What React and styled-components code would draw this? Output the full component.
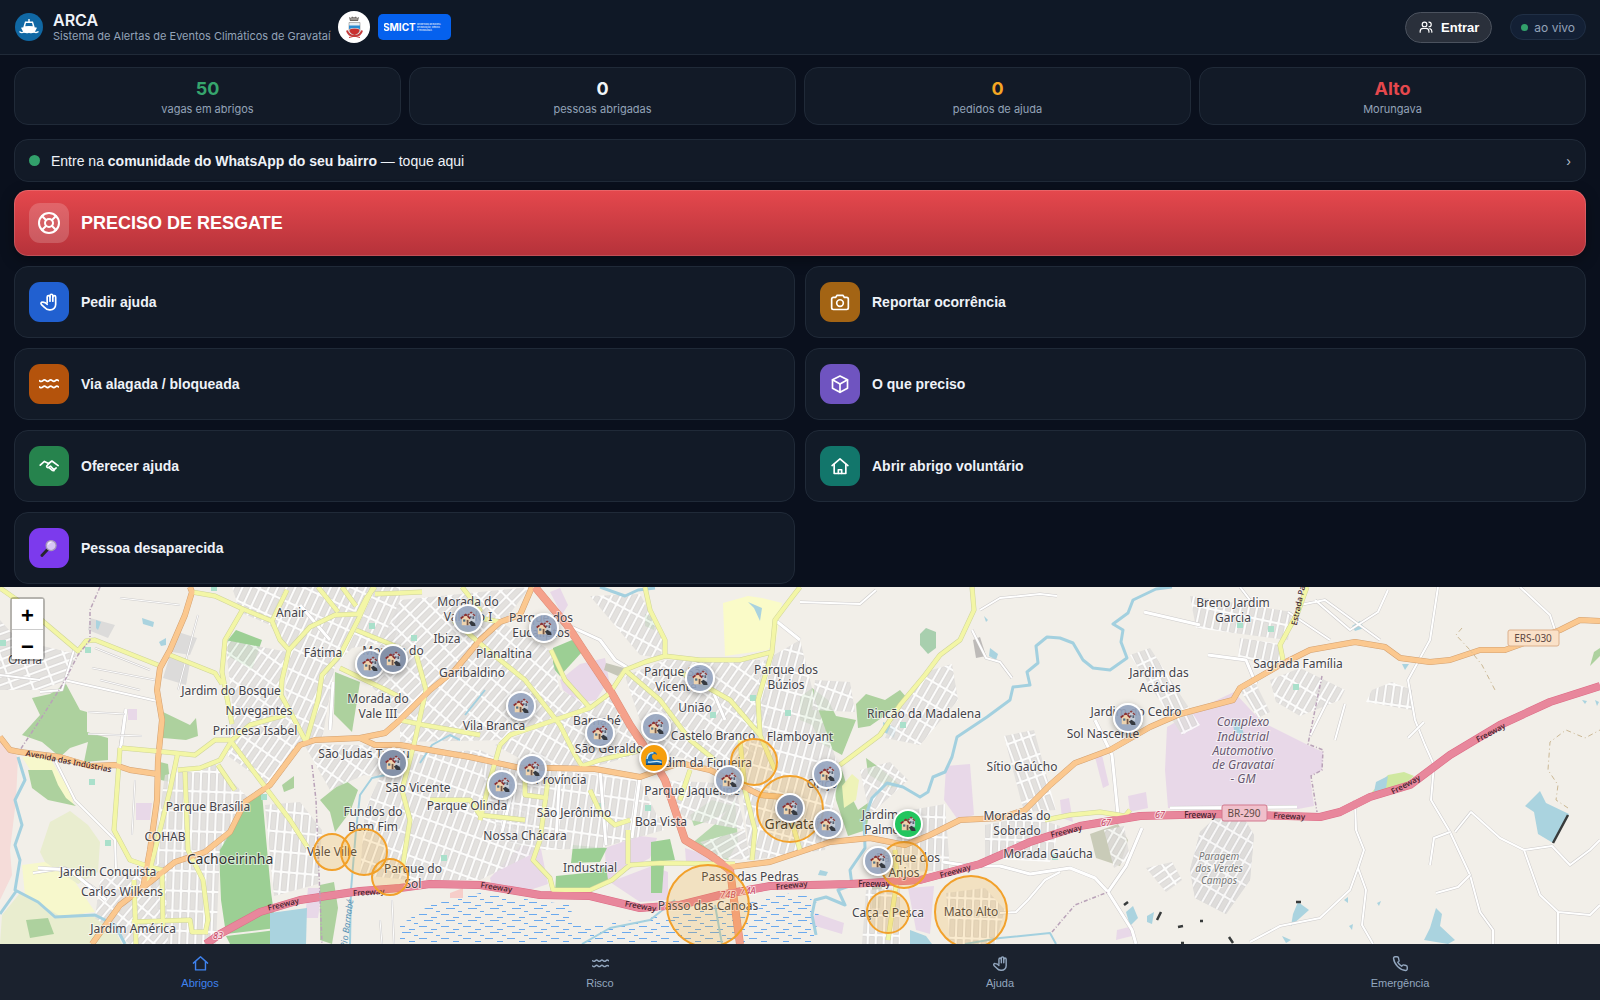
import React, { useState } from "react";
import styled, { createGlobalStyle } from "styled-components";

const stats = [
  { value: "50", label: "vagas em abrigos", color: "#36a56d" },
  { value: "0", label: "pessoas abrigadas", color: "#f1f5f9" },
  { value: "0", label: "pedidos de ajuda", color: "#f5a623" },
  { value: "Alto", label: "Morungava", color: "#e5484d" },
];

const actions = [
  { icon: "hand", label: "Pedir ajuda", color: "#2160d0" },
  { icon: "camera", label: "Reportar ocorrência", color: "#a36414" },
  { icon: "waves", label: "Via alagada / bloqueada", color: "#b4530c" },
  { icon: "box", label: "O que preciso", color: "#6f54c0" },
  { icon: "shake", label: "Oferecer ajuda", color: "#26834d" },
  { icon: "shelter", label: "Abrir abrigo voluntário", color: "#12766b" },
  { icon: "search", label: "Pessoa desaparecida", color: "#7c3aed" },
];

const tabs = [
  { icon: "home", label: "Abrigos" },
  { icon: "waves", label: "Risco" },
  { icon: "hand", label: "Ajuda" },
  { icon: "phone", label: "Emergência" },
];

const iconPaths = {
  hand: [
    "M9.8 13V6a1.7 1.7 0 0 1 3.4 0v5",
    "M13.2 6V4.4a1.7 1.7 0 0 1 3.4 0V11",
    "M16.6 6a1.7 1.7 0 0 1 3.4 0v9a6.5 6.5 0 0 1-6.5 6.5h-1c-2.6 0-4.3-1-5.6-2.8l-3.900-3.600a1.700 1.700 0 0 1 1.700-2.900c1.900.1 3.600.6 5.100 2.600",
  ],
  camera: [
    "M8.5 4h7L17.3 6.500H20a2 2 0 0 1 2 2V19a2 2 0 0 1-2 2H4a2 2 0 0 1-2-2V8.500a2 2 0 0 1 2-2h2.700z",
    "M16 13.300a4 4 0 1 1-8 0 4 4 0 0 1 8 0z",
  ],
  waves: [
    "M.5 8c1.600 1.400 2.800 1.400 4.200 0s2.400-1.200 3.700 0 2.400 1.400 3.800 0 2.400-1.200 3.700 0 2.400 1.400 3.800 0 2.200-1.200 3.800 0",
    "M.5 15.500c1.600 1.400 2.800 1.400 4.200 0s2.400-1.200 3.700 0 2.400 1.400 3.800 0 2.400-1.200 3.700 0 2.400 1.400 3.800 0 2.200-1.200 3.800 0",
  ],
  box: ["M12 2.500 21 7v10l-9 5-9-5V7z", "M3 7l9 5 9-5", "M12 12v10"],
  shake: [
    "M1.500 11 6.500 6.500l5 2.500 4-3 7.500 5.500",
    "M12 9 9.200 12a1.600 1.600 0 0 0 2.300 1.800l2.300-1.600 4.200 4.300 2.600-2.200",
    "M12.800 14.500l3.200 2.800 2 .2",
  ],
  shelter: ["M2.500 11.500 12 3.500l9.500 8", "M5 10v11h14V10", "M10 21v-4.500h4V21"],
  home: ["M2 11.500 12 2.500 22 11.500", "M5 9.500V21h14V9.500"],
  phone: [
    "M21.500 16.800v3a2 2 0 0 1-2.200 2C11 21 3 13 2.200 4.700a2 2 0 0 1 2-2.200h3a2 2 0 0 1 2 1.700c.1 1 .4 1.900.7 2.800a2 2 0 0 1-.4 2.100L8.200 10.400a16 16 0 0 0 5.400 5.400l1.300-1.300a2 2 0 0 1 2.100-.4c.9.300 1.800.6 2.800.7a2 2 0 0 1 1.700 2z",
  ],
  people: [
    "M13.500 7.500a4 4 0 1 1-8 0 4 4 0 0 1 8 0z",
    "M2 21v-2a5 5 0 0 1 5-4.500h5a5 5 0 0 1 5 4.500v2",
    "M17 3.500a4 4 0 0 1 0 8",
    "M18.500 14.800A5 5 0 0 1 22 19.500V21",
  ],
  buoy: [
    "M22 12a10 10 0 1 1-20 0 10 10 0 0 1 20 0z",
    "M16 12a4 4 0 1 1-8 0 4 4 0 0 1 8 0z",
    "M5 5l4.200 4.200M14.800 14.800 19 19M19 5l-4.200 4.200M9.200 14.800 5 19",
  ],
};

function Icon({ name, size = 20, weight = 2 }) {
  if (name === "search") {
    return (
      <svg width={size} height={size} viewBox="0 0 24 24" aria-hidden="true">
        <path d="M3.500 21 10.500 13.500" stroke="#26262e" strokeWidth="3.500" strokeLinecap="round" />
        <circle cx="14.500" cy="9" r="6" fill="#d7c6f5" stroke="#a79bb8" strokeWidth="1.500" />
        <path d="M11 8a4 4 0 0 1 4-3" stroke="#f4edff" strokeWidth="1.500" fill="none" />
      </svg>
    );
  }
  return (
    <svg
      width={size}
      height={size}
      viewBox="0 0 24 24"
      fill="none"
      stroke="currentColor"
      strokeWidth={weight}
      strokeLinecap="round"
      strokeLinejoin="round"
      aria-hidden="true"
    >
      {iconPaths[name].map((d) => (
        <path key={d} d={d} />
      ))}
    </svg>
  );
}

const ArcaLogo = () => (
  <svg width="28" height="28" viewBox="0 0 28 28" aria-hidden="true">
    <circle cx="14" cy="14" r="14" fill="#1068a4" />
    <path d="M13.300 6h1.400v2.500h-1.400zM10 8.500h8l1.800 6H8.200z" fill="#fff" />
    <path d="M11 10h6l.8 3.200h-7.600z" fill="#1068a4" />
    <path d="M6 14.800l8-1.800 8 1.800-2.500 4.700h-11z" fill="#fff" />
    <path d="M4.500 18.500c2 2 3.500 1 4.700.4 1.800 1 3.300 1 4.800 0 1.500 1 3 1 4.800 0 1.500.7 3 1.200 4.700-.4" stroke="#fff" strokeWidth="1.300" fill="none" />
  </svg>
);

const CityCrest = () => (
  <svg width="32" height="32" viewBox="0 0 32 32" aria-hidden="true">
    <circle cx="16" cy="16" r="16" fill="#fff" />
    <path d="M11 6l2 1 1-1.500 2 1 2-1 1 1.500 2-1-1 4h-8z" fill="#6f6a66" />
    <path d="M12.500 8h7" stroke="#c8c3be" strokeWidth="1" />
    <path d="M11 11.500h11v7q0 4-5.500 5.500-5.500-1.500-5.500-5.500z" fill="#e8eef4" stroke="#777" strokeWidth=".5" />
    <path d="M11 14.500h11v3.500q-5.500-2-11 0z" fill="#2d8bd0" />
    <path d="M11.500 18.500q5-2 10 0 0 4-5 5.500-5-1.500-5-5.500z" fill="#c9302f" />
    <path d="M9 19.500c1 4 3 5.500 7.500 5.500s6.500-1.500 7.500-5.500" stroke="#c43b3b" strokeWidth="2" fill="none" />
    <path d="M11 26.500l4-1h3l4 1" stroke="#c43b3b" strokeWidth="1" fill="none" />
  </svg>
);

const SmictLogo = () => (
  <svg width="61" height="14" viewBox="0 0 61 14" fill="#fff" fontFamily="Inter, sans-serif" fontWeight="700">
    <text x="-1" y="10.500" fontSize="10">SMICT</text>
    <g fontSize="2" fontWeight="500">
      <text x="33" y="5">SECRETARIA MUNICIPAL</text>
      <text x="33" y="8">DE INOVAÇÃO, CIÊNCIA</text>
      <text x="33" y="11">E TECNOLOGIA</text>
    </g>
  </svg>
);

// The map is drawn in its own space: x 0..1600, y 587..944
const MAP = { left: 0, top: 587, width: 1600, height: 357 };

const land = [
  { fill: "#f5dcd9", points: "0,740 18,757 16,800 10,850 12,875 0,900" },
  { fill: "#e9edcf", points: "40,852 50,822 70,811 88,825 100,842 98,872 78,884 48,868" },
  { fill: "#e9edcf", points: "20,893 45,905 90,915 112,925 122,944 0,944 2,915" },
  { fill: "#f7f8cc", points: "22,757 48,755 60,775 70,790 74,806 56,800 40,785" },
  { fill: "#f7f8cc", points: "22,865 45,862 75,882 95,912 60,916 25,895" },
  { fill: "#fafbc8", points: "723,603 748,596 762,598 782,603 776,640 768,650 725,656" },
  { fill: "#dcdbda", points: "178,632 197,638 190,655 172,652" },
  { fill: "#dcdbda", points: "170,655 190,663 186,685 163,678" },
  { fill: "#dcdbda", points: "90,618 115,625 108,638 88,630" },
  { fill: "#e8d8e8", points: "560,680 580,664 605,658 609,680 596,700 580,703 563,690" },
  { fill: "#e8d8e8", points: "550,592 560,588 568,605 562,615" },
  { fill: "#e8d8e8", points: "490,878 520,846 540,844 548,884 530,890 492,886" },
  { fill: "#e8d8e8", points: "605,848 640,836 657,838 650,858 606,882" },
  { fill: "#e8d8e8", points: "610,882 652,866 668,872 668,900 640,902" },
  { fill: "#e8d8e8", points: "685,848 706,855 715,862 686,862" },
  { fill: "#e8d8e8", points: "136,803 152,803 150,820 136,820" },
  { fill: "#e8d8e8", points: "128,709 137,709 137,720 128,720" },
  { fill: "#e8d8e8", points: "308,888 322,888 318,918 305,918" },
  { fill: "#f6cdc9", points: "450,893 463,888 463,898 450,898" },
  { fill: "#e8d8e8", points: "946,766 970,764 974,815 958,820 944,800" },
  { fill: "#e8d8e8", points: "908,888 934,886 930,934 916,930" },
  { fill: "#e8d8e8", points: "815,913 844,923 842,934 812,925" },
  { fill: "#e8d8e8", points: "1095,757 1102,755 1109,785 1103,788" },
  { fill: "#e8d8e8", points: "1060,800 1069,798 1073,822 1062,818" },
  { fill: "#e8d8e8", points: "1128,796 1146,792 1148,808 1130,812" },
  { fill: "#e8d8e8", points: "1117,930 1133,926 1132,936 1116,940" },
  { fill: "#e8d8e8", points: "1167,727 1200,708 1234,692 1262,722 1290,736 1308,745 1323,752 1322,770 1310,776 1314,806 1298,809 1168,808 1165,770" },
  { fill: "#add19e", points: "22,735 40,715 32,698 50,694 66,684 80,710 87,712 87,732 108,738 108,760 84,762 88,742 70,748 60,757 42,742" },
  { fill: "#add19e", points: "28,770 52,770 58,785 66,798 76,806 48,800 32,788" },
  { fill: "#add19e", points: "26,920 48,918 54,934 30,938" },
  { fill: "#9ccf94", points: "248,800 262,793 266,838 271,892 276,928 226,934 221,900 219,850" },
  { fill: "#9ccf94", points: "226,936 276,930 280,944 230,944" },
  { fill: "#9ccf94", points: "228,640 236,630 262,640 252,669 228,656" },
  { fill: "#add19e", points: "163,712 190,725 196,718 198,736 186,740 163,738" },
  { fill: "#add19e", points: "335,672 360,682 352,732 334,714" },
  { fill: "#add19e", points: "320,800 345,780 358,790 350,812 335,832 330,812" },
  { fill: "#add19e", points: "320,885 334,882 338,908 332,944 320,940" },
  { fill: "#add19e", points: "160,762 168,764 170,782 161,780" },
  { fill: "#add19e", points: "282,785 294,776 294,788 284,792" },
  { fill: "#9ccf94", points: "553,648 572,640 582,652 560,676 553,668" },
  { fill: "#9ccf94", points: "555,894 556,876 596,872 606,866 608,880 590,892" },
  { fill: "#9ccf94", points: "573,845 607,848 600,862 571,863" },
  { fill: "#9ccf94", points: "651,842 670,839 675,860 651,862" },
  { fill: "#9ccf94", points: "651,865 664,865 662,893 651,893" },
  { fill: "#9ccf94", points: "645,614 656,618 654,630 645,626" },
  { fill: "#b8d8ae", points: "690,845 720,820 735,800 738,842 728,860 705,852" },
  { fill: "#b8d8ae", points: "690,815 712,800 734,806 716,818 694,826" },
  { fill: "#add19e", points: "800,697 812,688 828,700 836,716 856,720 842,755 822,744 812,725 800,720" },
  { fill: "#add19e", points: "856,704 866,694 885,700 900,690 907,698 890,712 870,726 858,728" },
  { fill: "#a8cfae", points: "920,634 926,628 936,632 936,648 928,654 920,645" },
  { fill: "#add19e", points: "832,768 842,770 848,790 858,810 872,800 866,830 848,836 836,800" },
  { fill: "#add19e", points: "866,758 880,768 900,785 890,788 868,774" },
  { fill: "#eef3b8", points: "842,786 852,774 859,780 856,800 844,808" },
  { fill: "#cfe8a0", points: "1372,792 1388,775 1404,772 1414,776 1400,788 1378,793" },
  { fill: "#add19e", points: "1590,666 1594,652 1600,648 1600,656" },
  { fill: "#dad9d8", points: "1200,832 1218,815 1245,820 1254,835 1250,880 1226,914 1195,898 1190,870" },
  { fill: "#c9cbb8", points: "1090,834 1118,824 1128,840 1120,866 1096,858" },
  { fill: "#c9cbb8", points: "872,886 882,886 880,908 872,908" },
  { fill: "#bdbab8", points: "973,640 980,637 986,656 976,658" },
  { fill: "#c5c6b8", points: "606,663 624,668 618,676 604,670" },
  { fill: "#aad3df", points: "270,913 307,908 306,944 270,944" },
  { fill: "#aad3df", points: "142,618 154,622 153,627 143,624" },
  { fill: "#aad3df", points: "159,642 166,638 166,645 161,646" },
  { fill: "#aad3df", points: "96,620 101,622 98,630 96,628" },
  { fill: "#aad3df", points: "883,722 896,728 894,738 884,732" },
  { fill: "#aad3df", points: "748,602 762,608 760,621 754,608" },
  { fill: "#aad3df", points: "1525,806 1540,791 1546,803 1569,814 1553,843 1538,834 1534,812" },
  { fill: "#aad3df", points: "1436,908 1442,914 1440,926 1455,940 1448,944 1424,940 1430,928" },
  { fill: "#aad3df", points: "1298,902 1309,910 1300,918 1291,926 1293,914" },
  { fill: "#aad3df", points: "1133,906 1138,918 1130,926 1126,912" },
  { fill: "#aad3df", points: "1147,916 1154,912 1152,924 1147,922" },
  { fill: "#aad3df", points: "1282,936 1291,940 1286,943" },
  { fill: "#aad3df", points: "1344,900 1348,897 1348,903" },
  { fill: "#aad3df", points: "1377,903 1381,901 1379,906" },
  { fill: "#aad3df", points: "1349,926 1353,924 1352,930" },
  { fill: "#aad3df", points: "1582,700 1587,701 1585,704" },
  { fill: "#aad3df", points: "1595,700 1599,702 1597,706" },
  { fill: "#aad3df", points: "820,870 828,872 826,876 818,875" },
  { fill: "#aad3df", points: "984,616 988,620 986,622" },
  { fill: "#aad3df", points: "910,930 926,936 932,944 910,944" },
  { fill: "#aad3df", points: "1352,626 1360,621 1364,628 1355,631" },
  { fill: "#aad3df", points: "1402,664 1409,664 1405,670" },
  { fill: "#aad3df", points: "1232,718 1241,724 1246,742 1234,730" },
  { fill: "#aad3df", points: "1376,782 1388,776 1386,788 1374,792" },
  { fill: "#aad3df", points: "990,648 998,654 996,660 989,656" },
];

// Small mint squares for pitches and squares
const pitches = [
  [88, 650], [92, 782], [3, 643], [108, 843], [214, 588], [264, 797], [372, 626], [414, 638], [444, 858],
  [648, 808], [602, 806], [753, 698], [713, 715], [788, 713], [903, 725], [1055, 857], [1240, 625], [1271, 629], [1296, 687],
];

// Residential blocks, filled with a rotated street grid
const blocks = [
  { grid: 25, points: "232,587 400,587 400,640 352,648 335,665 322,740 300,744 285,690 290,655 270,625 240,612" },
  { grid: 70, points: "0,620 18,640 76,654 68,680 40,690 0,690" },
  { grid: 35, points: "225,640 288,652 282,690 305,742 270,786 228,756 232,700" },
  { grid: 2, points: "165,775 215,764 250,800 220,850 216,944 165,944 150,880" },
  { grid: 40, points: "100,880 165,862 168,944 130,944 95,918" },
  { grid: 5, points: "265,805 300,802 322,830 318,884 274,896" },
  { grid: 35, points: "304,744 400,746 400,780 364,775 330,790" },
  { grid: 45, points: "365,680 400,600 530,587 505,620 470,655 400,716" },
  { grid: 40, points: "400,720 500,622 550,650 560,690 590,705 505,740 400,742" },
  { grid: 20, points: "390,755 480,750 525,772 540,850 480,880 410,880 360,875 365,810" },
  { grid: 8, points: "480,760 640,780 664,830 600,848 545,850 500,840" },
  { grid: 30, points: "495,745 590,708 612,696 645,752 590,768 530,764" },
  { grid: 28, points: "590,596 640,594 664,640 660,658 640,655" },
  { grid: 35, points: "625,676 665,660 760,660 770,720 740,790 690,760 650,750" },
  { grid: 15, points: "762,662 800,640 815,700 840,770 825,850 750,860 742,790" },
  { grid: 20, points: "660,780 735,784 745,830 690,820 675,810" },
  { grid: 60, points: "700,842 745,830 750,860 718,858" },
  { grid: 20, points: "815,680 850,682 855,712 812,710" },
  { grid: 30, points: "925,672 952,664 958,700 920,745 885,738 900,705" },
  { grid: 30, points: "860,770 890,762 908,780 870,815" },
  { grid: 2, points: "900,812 945,804 950,870 912,872 895,850" },
  { grid: 2, points: "866,890 900,888 900,944 862,944" },
  { grid: 2, points: "946,893 985,888 1005,910 995,944 950,944" },
  { grid: -20, points: "1004,736 1034,730 1056,810 1024,812" },
  { grid: 2, points: "985,825 1030,816 1060,826 1050,862 985,858" },
  { grid: -25, points: "1130,655 1150,648 1200,725 1182,735" },
  { grid: 12, points: "1190,596 1292,612 1288,640 1196,628" },
  { grid: 12, points: "1240,638 1280,644 1282,666 1238,658" },
  { grid: -30, points: "1240,690 1256,684 1270,712 1258,718" },
  { grid: 30, points: "1270,680 1300,668 1345,690 1340,700 1300,716 1276,702" },
  { grid: 8, points: "1372,690 1392,682 1412,690 1412,710 1366,702" },
  { grid: 55, points: "1146,868 1172,862 1182,880 1166,892" },
  { grid: 30, points: "1200,832 1218,815 1245,820 1254,835 1250,880 1226,914 1195,898 1190,870" },
  { grid: 30, points: "1104,830 1124,826 1130,858 1114,868" },
];

const grids = [...new Set(blocks.map((b) => b.grid))];

const streams = [
  { w: 3, d: "M1172 587L1156 589 1133 600 1128 613 1113 624 1123 630 1121 642 1127 658 1110 670 1093 668 1083 660 1073 643 1060 638 1047 637 1036 646 1038 663 1027 672 1030 685 1013 687 1010 700 987 717 957 737 952 757 945 772 933 777 928 792 920 797 903 787 887 783 872 798 864 820 865 848 850 870 852 885 838 890 845 905 826 897 815 900 812 915 816 935" },
  { w: 3, d: "M18 757L25 780 15 800 22 825 15 845 20 860 15 890 38 902 55 917 95 915 115 925 125 944M17 890L0 914" },
  { w: 2, d: "M350 944L351 890 356 830 360 795 372 778 390 774" },
  { w: 2, d: "M582 944L610 928 650 920 675 900M715 905L722 944M965 944L1000 938 1050 933 1056 944" },
  { w: 3, d: "M600 587L625 596 638 590 655 588" },
  { w: 2, d: "M420 763L432 745 450 735 460 740M465 715L485 690" },
];

const minorRoads = [
  { w: 2, d: "M64 680L157 701M126 709L120 748M40 692L62 690 74 650M0 675L40 680M55 760L75 800 115 840 116 870M33 873L65 868 100 892" },
  { w: 3, d: "M126 709L121 746M333 682L330 730M300 605L330 640M38 868L70 870 106 900" },
  { w: 1, d: "M92 668L155 680M100 680L140 690M88 712L125 714M88 734L142 736M95 648L150 670M198 615L178 690M120 598L180 605M135 780L132 835M380 920L382 944M392 900L394 944" },
  { w: 2, d: "M1240 587L1250 600M1438 587L1430 640 1408 680 1415 720 1425 745 1434 765 1431 800 1450 832 1470 875 1480 912 1493 930 1493 944M1520 587L1550 615 1555 630" },
  { w: 2, d: "M1250 942L1280 926 1320 918 1350 890 1358 868 1364 850 1356 830 1355 800M1358 868L1366 890 1362 925 1373 944M1455 832L1471 812 1500 838 1524 850 1540 895 1558 912 1590 915 1600 905M1524 850L1552 846 1570 865 1590 850 1600 840M1450 832L1434 838 1430 865M1470 875L1458 887 1436 893M1558 912L1558 944M1424 722L1408 738" },
  { w: 3, d: "M1095 720L1112 755 1118 815M943 862L970 866 1000 866 1030 874 1070 868 1095 878 1108 892 1132 930 1136 944M1108 892L1126 866 1142 828" },
  { w: 2, d: "M1060 872L1045 880 1028 900 1016 912 1000 913M980 610L1000 598 1040 594 1057 596M972 630L986 658 1000 662 1012 678M800 602L860 604 876 590" },
  { w: 3, d: "M1144 612L1200 625M1208 655L1246 660 1256 684M1170 808L1297 807" },
  { w: 3, d: "M567 625L600 640 615 660 628 668M520 760L500 840M560 768L556 840M600 770L606 845M640 776L632 838M700 660L725 720M775 620L800 640" },
  { w: 2, d: "M1288 612L1330 640M1315 600L1350 630 1378 612 1388 590M1300 605L1325 600 1380 640M1345 704L1335 740M1310 736L1328 700" },
];

const mainRoads = [
  { kind: "yellow", d: "M0 588L20 602 78 651 86 641 95 640 158 665" },
  { kind: "yellow", d: "M192 592L215 596 243 609 272 621 280 640 289 650 282 680 281 695 292 715 306 742" },
  { kind: "yellow", d: "M243 609L225 640 222 672 232 724M170 655L215 673 222 684M272 621L287 590M289 650L310 627 335 615 358 614 367 597 375 587" },
  { kind: "yellow", d: "M318 587L338 612M356 630L400 648M340 668L365 680 382 688 400 697M342 587L356 606M375 594L400 593 422 592" },
  { kind: "yellow", d: "M122 748L155 751 195 755 215 740 230 740 260 780 290 820 308 848" },
  { kind: "yellow", d: "M120 748L117 790 114 830 130 860 150 867 162 870 163 930M178 752L170 790 155 850 146 885" },
  { kind: "yellow", d: "M185 772L188 850 203 880 208 920 205 934M178 770L200 768 220 760 232 740 250 725 285 715M218 765L235 790M132 922L190 920 192 932 208 932M134 880L136 944" },
  { kind: "yellow", d: "M415 650L426 690 415 740 402 790 410 820 402 870M400 720L424 725 480 735" },
  { kind: "yellow", d: "M462 587L480 610 455 622 490 652 525 680 560 725 575 755 582 766" },
  { kind: "yellow", d: "M480 618L500 622M500 745L510 735 540 725 590 708 610 693 625 670 645 662 665 656 700 660 740 660 772 652 775 620 790 600 800 587" },
  { kind: "yellow", d: "M645 587L650 610 665 640 665 656M551 650L565 680 590 708M625 670L660 700 690 740 715 760" },
  { kind: "yellow", d: "M500 745L490 780 480 820M525 770L525 795 548 798M548 780L540 840 533 860 550 878 553 890 590 890 612 880 630 865 660 863 735 864" },
  { kind: "yellow", d: "M582 766L600 760 650 748M680 672L730 700 760 735 775 770M772 652L758 700 760 735M740 740L745 790 755 830 752 860M800 800L790 815 800 850" },
  { kind: "yellow", d: "M590 790L600 812 615 825 630 820M430 800L470 800 480 815 525 820M690 770L680 800M628 864L628 830" },
  { kind: "yellow", d: "M972 587L974 610 960 640 940 655 925 675 900 705 880 735 840 765" },
  { kind: "yellow", d: "M1045 820L1070 815 1100 812 1125 816 1130 810M895 850L897 880 888 940M1307 587L1298 612 1280 645 1283 660" },
  { kind: "yellow", d: "M306 742L318 700 322 675 340 655 358 620 373 587" },
  { kind: "orange", d: "M190 587L192 592 185 615 170 650 160 668 157 690 162 720 158 760 157 800 150 850 143 888" },
  { kind: "orange", d: "M0 737L10 750 20 752 60 757 90 766 115 765 130 770 157 774" },
  { kind: "orange", d: "M92 944L120 905 150 882 175 862 205 852 230 832 245 802 270 785 285 765 300 745 315 740 360 738 385 733 400 720 430 690 455 670 480 640 500 622 520 615 532 587" },
  { kind: "orange", d: "M360 738L375 745 400 745 470 757 520 768 550 768 595 769 640 777 680 763 710 770 740 785 760 795 795 798" },
  { kind: "orange", d: "M730 867L770 862 800 852 830 842 870 838 905 845 930 835 960 820 1000 818 1025 810 1050 785 1075 763 1110 750 1150 727 1180 714 1233 700 1240 688 1280 665 1310 650 1355 642 1385 647 1400 658 1430 662 1450 660 1480 650 1505 650 1560 630 1580 620 1600 621" },
  { kind: "trunk", d: "M535 587L550 605 567 625 590 660 610 690 630 725 650 755 665 780 675 810 685 840 710 855 730 870 734 900 740 944" },
  { kind: "motorway", d: "M206 944L220 934 260 912 300 900 360 891 400 888 430 884 480 885 540 895 590 896 640 908 680 905 720 895 770 886 850 884 920 880 980 864 1030 842 1080 826 1140 816 1220 814 1320 817 1340 812 1370 797 1410 785 1450 755 1500 725 1550 702 1600 686" },
];

const roadLook = {
  yellow: ["#cfd49a", "#f3f6a6", 4],
  orange: ["#d3a070", "#fbc88f", 5],
  trunk: ["#dd8d78", "#f5a18b", 7],
  motorway: ["#dc6b85", "#e8879c", 7],
};

const places = [
  [291, 617, "Anair"], [323, 657, "Fátima"], [231, 695, "Jardim do Bosque"], [259, 715, "Navegantes"],
  [255, 735, "Princesa Isabel"], [378, 703, "Morada do"], [378, 718, "Vale III"], [364, 758, "São Judas Tadeu"],
  [208, 811, "Parque Brasília"], [165, 841, "COHAB"], [108, 876, "Jardim Conquista"], [122, 896, "Carlos Wilkens"],
  [133, 933, "Jardim América"], [373, 816, "Fundos do"], [373, 831, "Bom Fim"], [332, 856, "Vale Ville"],
  [413, 873, "Parque do"], [413, 888, "Sol"], [25, 664, "Olaria"], [468, 606, "Morada do"], [468, 621, "Vale do I"],
  [447, 643, "Ibiza"], [541, 622, "Parque dos"], [541, 637, "Eucaliptos"], [393, 655, "Morada do"],
  [504, 658, "Planaltina"], [472, 677, "Garibaldino"], [494, 730, "Vila Branca"], [597, 725, "Barnabé"],
  [609, 753, "São Geraldo"], [676, 676, "Parque São"], [676, 691, "Vicente"], [695, 712, "União"],
  [713, 740, "Castelo Branco"], [800, 741, "Flamboyant"], [701, 767, "Jardim da Figueira"], [692, 795, "Parque Jaqueline"],
  [786, 674, "Parque dos"], [786, 689, "Búzios"], [418, 792, "São Vicente"], [467, 810, "Parque Olinda"],
  [561, 784, "Província"], [574, 817, "São Jerônimo"], [661, 826, "Boa Vista"], [525, 840, "Nossa Chácara"],
  [590, 872, "Industrial"], [750, 881, "Passo das Pedras"], [708, 910, "Passo das Canoas"], [822, 788, "Oriço"],
  [924, 718, "Rincão da Madalena"], [880, 819, "Jardim"], [892, 834, "Palmeiras"], [908, 862, "Parque dos"],
  [904, 877, "Anjos"], [888, 917, "Caça e Pesca"], [971, 916, "Mato Alto"], [1022, 771, "Sítio Gaúcho"],
  [1017, 820, "Moradas do"], [1017, 835, "Sobrado"], [1048, 858, "Morada Gaúcha"], [1159, 677, "Jardim das"],
  [1160, 692, "Acácias"], [1136, 716, "Jardim do Cedro"], [1103, 738, "Sol Nascente"], [1233, 607, "Breno Jardim"],
  [1233, 622, "Garcia"], [1298, 668, "Sagrada Família"],
];

const areaNames = [
  [1243, 726, "Complexo"], [1243, 741, "Industrial"], [1243, 755, "Automotivo"], [1243, 769, "de Gravataí"], [1243, 783, "- GM"],
];

const parkNames = [[1219, 860, "Paragem"], [1219, 872, "dos Verdes"], [1219, 884, "Campos"]];

const roadNames = [
  [284, 907, -14, "Freeway"], [369, 895, -4, "Freeway"], [496, 890, 9, "Freeway"], [640, 909, 10, "Freeway"],
  [792, 888, -6, "Freeway"], [874, 887, 0, "Freeway"], [956, 874, -16, "Freeway"], [1067, 834, -14, "Freeway"],
  [1200, 818, 0, "Freeway"], [1289, 819, 3, "Freeway"], [1407, 787, -28, "Freeway"], [1492, 735, -28, "Freeway"],
  [68, 764, 11, "Avenida das Indústrias"], [1301, 606, -78, "Estrada Pa"],
];

const exits = [[218, 939, "83"], [728, 898, "74B"], [748, 894, "74A"], [1106, 826, "67"], [1160, 818, "67"]];

const riskZones = [
  [332, 852, 18], [364, 852, 23], [390, 877, 18], [754, 762, 23], [790, 809, 33],
  [708, 906, 41], [904, 865, 23], [888, 912, 21], [971, 912, 36],
];

const pins = [
  [370, 664], [393, 659, "dark"], [393, 763, "dark"], [468, 619], [544, 628], [521, 706], [600, 733], [656, 727],
  [654, 758, "flood"], [700, 678], [532, 769], [502, 785], [729, 780], [790, 808, "dark"], [827, 774],
  [828, 824], [878, 861], [908, 824, "open"], [1128, 718],
];

const ShelterGlyph = () => (
  <svg width="16" height="16" viewBox="0 0 18 18" aria-hidden="true">
    <path d="M9 4l4-3 4 4v7H9z" fill="#c5ccd6" />
    <path d="M8.500 5l4-3.500L17 5.500" stroke="#8d3c3c" strokeWidth="1.600" fill="none" strokeDasharray="3 1" />
    <path d="M11 6h2v2h-2zM14 6h2v3h-2z" fill="#586477" />
    <path d="M2 8l4.500-3.500L11 8v8H2z" fill="#eed3ae" />
    <path d="M.8 8.500 6.500 4l5 4.500" stroke="#8c2f2f" strokeWidth="2" fill="none" strokeDasharray="4 1" />
    <path d="M3.500 9.500H6V12H3.500z" fill="#4d7087" />
    <path d="M7.500 10h2v6h-2z" fill="#765647" />
    <path d="M10 13l3-2 4 3 .5 3H13z" fill="#353940" />
  </svg>
);

const FloodGlyph = () => (
  <svg width="18" height="18" viewBox="0 0 18 18" aria-hidden="true">
    <path d="M1 15c-1-6 1-11 6-12 3-.6 5 1 5 3-2-1.600-5-1-5 1.500S9 11.500 11 11c2-.8 4-.6 6 .5V15z" fill="#1c6fb0" />
    <path d="M2 10c.5-4 3-6.500 6.500-6.200M3 13c4 .8 7-.8 9-.6s3 .6 4.500 1" stroke="#cbeaf5" strokeWidth="1.300" fill="none" />
    <path d="M1 15.300h16" stroke="#15476f" strokeWidth="1.400" />
  </svg>
);

function CityMap() {
  return (
    <MapDrawing viewBox={`${MAP.left} ${MAP.top} ${MAP.width} ${MAP.height}`} preserveAspectRatio="xMidYMid slice">
      <defs>
        {grids.map((angle) => (
          <pattern key={angle} id={`grid-${angle}`} width="8" height="20" patternUnits="userSpaceOnUse" patternTransform={`rotate(${angle})`}>
            <rect width="8" height="20" fill="#dfdddb" />
            <path d="M0 4H8M4 0V20" stroke="#cac8c8" strokeWidth="4" />
            <path d="M0 4H8M4 0V20" stroke="#fff" strokeWidth="2.500" />
          </pattern>
        ))}
        <pattern id="marsh" width="22" height="12" patternUnits="userSpaceOnUse">
          <path d="M1 2.500h8M13 5.500h6M6 8.500h9M18 11.500h4" stroke="#6aa9ee" strokeWidth="1" />
        </pattern>
      </defs>

      <rect x="0" y="587" width="1600" height="357" fill="#f2efe9" />
      {land.map((area) => (
        <polygon key={area.points} fill={area.fill} points={area.points} />
      ))}
      {blocks.map((block) => (
        <polygon key={block.points} fill={`url(#grid-${block.grid})`} points={block.points} fillOpacity="0.8" />
      ))}
      {pitches.map(([x, y]) => (
        <rect key={`${x}-${y}`} x={x - 3} y={y - 3} width="6" height="6" fill="#aae0cb" />
      ))}
      <path d="M400 925L430 905 480 893 570 905 575 925 600 925 690 912 780 895 800 892 820 905 814 944H400z" fill="url(#marsh)" />

      {streams.map((s) => (
        <path key={s.d} d={s.d} fill="none" stroke="#a3d0df" strokeWidth={s.w} strokeLinejoin="round" />
      ))}
      {minorRoads.map((r) => (
        <g key={r.d} fill="none" strokeLinejoin="round">
          <path d={r.d} stroke="#cdcbcb" strokeWidth={r.w + 1} />
          <path d={r.d} stroke="#fff" strokeWidth={r.w} />
        </g>
      ))}
      {mainRoads.map((r) => (
        <path key={r.d} d={r.d} fill="none" stroke={roadLook[r.kind][0]} strokeWidth={roadLook[r.kind][2] + 1} strokeLinejoin="round" />
      ))}
      {mainRoads.map((r) => (
        <path key={r.d} d={r.d} fill="none" stroke={roadLook[r.kind][1]} strokeWidth={roadLook[r.kind][2]} strokeLinejoin="round" />
      ))}
      <g fill="none" stroke="#b9a2b8" strokeWidth="1.500" strokeDasharray="4 2 1 2">
        <path d="M100 587L90 610 90 640 78 655 64 682 40 720 20 750M312 765L316 800 318 850 322 944" />
        <path d="M1322 676L1308 744 1323 750 1322 770 1311 776 1317 812M1052 932L1075 905 1108 892" />
      </g>
      <g fill="none" stroke="#cbb894" strokeDasharray="5 3 1 3">
        <path d="M1462 628L1456 635 1470 650 1482 665 1495 690M1568 808L1556 800 1558 785 1548 770 1550 742 1566 730 1585 738 1600 730" />
      </g>
      <path d="M1568 815L1553 843M1128 902l-4 3M1161 912l-4 8M1229 937l4 6M1178 927l5-1M1296 902h5M1200 921h3M1181 943h3" stroke="#383b3b" strokeWidth="2.500" />

      <PlaceText>
        {places.map(([x, y, name]) => (
          <text key={name + y + x} x={x} y={y}>{name}</text>
        ))}
      </PlaceText>
      <TownText>
        <text x="230" y="864">Cachoeirinha</text>
        <text x="792" y="829">Gravataí</text>
      </TownText>
      <AreaText>
        {areaNames.map(([x, y, name]) => (
          <text key={name} x={x} y={y}>{name}</text>
        ))}
      </AreaText>
      <ParkText>
        {parkNames.map(([x, y, name]) => (
          <text key={name} x={x} y={y}>{name}</text>
        ))}
      </ParkText>
      <RoadText>
        {roadNames.map(([x, y, turn, name]) => (
          <text key={name + x} transform={`translate(${x} ${y}) rotate(${turn})`}>{name}</text>
        ))}
      </RoadText>
      <ExitText>
        {exits.map(([x, y, name]) => (
          <text key={name + x} x={x} y={y}>{name}</text>
        ))}
      </ExitText>
      <RiverText>
        <text transform="translate(350 924) rotate(-82)">Rio Barnabé</text>
      </RiverText>
      <ShieldText>
        <rect x="1508" y="630" width="51" height="16" rx="2" fill="#fae1c8" stroke="#dcb08c" />
        <text x="1533" y="642">ERS-030</text>
        <rect x="1222" y="805" width="45" height="16" rx="2" fill="#f0c0cb" stroke="#d1788e" />
        <text x="1244" y="817">BR-290</text>
      </ShieldText>

      <g fill="#f59e0b" fillOpacity="0.18" stroke="#f2a12b" strokeWidth="2">
        {riskZones.map(([x, y, r]) => (
          <circle key={x} cx={x} cy={y} r={r} />
        ))}
      </g>
    </MapDrawing>
  );
}

export default function App() {
  const [active, setActive] = useState("Abrigos");

  return (
    <Page>
      <GlobalStyle />
      <Header>
        <ArcaLogo />
        <Brand>
          <Title>ARCA</Title>
          <Subtitle>Sistema de Alertas de Eventos Climáticos de Gravataí</Subtitle>
        </Brand>
        <Partners>
          <CityCrest />
          <SmictBadge>
            <SmictLogo />
          </SmictBadge>
        </Partners>
        <LoginButton type="button">
          <Icon name="people" size={14} />
          Entrar
        </LoginButton>
        <LiveBadge>
          <Dot $size={7} />
          ao vivo
        </LiveBadge>
      </Header>

      <Content>
        <Stats>
          {stats.map((stat) => (
            <Stat key={stat.label}>
              <StatValue $color={stat.color}>{stat.value}</StatValue>
              <StatLabel>{stat.label}</StatLabel>
            </Stat>
          ))}
        </Stats>

        <Community href="#comunidade">
          <Dot $size={11} />
          <span>
            Entre na <strong>comunidade do WhatsApp do seu bairro</strong> — toque aqui
          </span>
          <Chevron>›</Chevron>
        </Community>

        <RescueButton type="button">
          <IconTile $color="rgba(255, 255, 255, 0.18)">
            <Icon name="buoy" size={24} />
          </IconTile>
          PRECISO DE RESGATE
        </RescueButton>

        <Actions>
          {actions.map((action) => (
            <ActionButton key={action.label} type="button">
              <IconTile $color={action.color}>
                <Icon name={action.icon} />
              </IconTile>
              {action.label}
            </ActionButton>
          ))}
        </Actions>
      </Content>

      <MapArea>
        <CityMap />
        {pins.map(([x, y, kind]) => (
          <Pin
            key={`${x}-${y}`}
            type="button"
            $kind={kind}
            aria-label={kind === "flood" ? "Ponto de alagamento" : "Abrigo"}
            style={{ left: `${(x / MAP.width) * 100}%`, top: `${((y - MAP.top) / MAP.height) * 100}%` }}
          >
            {kind === "flood" ? <FloodGlyph /> : <ShelterGlyph />}
          </Pin>
        ))}
        <ZoomControl>
          <ZoomButton type="button">+</ZoomButton>
          <ZoomButton type="button">−</ZoomButton>
        </ZoomControl>
      </MapArea>

      <TabBar>
        {tabs.map((tab) => (
          <Tab key={tab.label} type="button" $active={tab.label === active} onClick={() => setActive(tab.label)}>
            <Icon name={tab.icon} size={17} />
            {tab.label}
          </Tab>
        ))}
      </TabBar>
    </Page>
  );
}

const GlobalStyle = createGlobalStyle`
  * {
    box-sizing: border-box;
  }
  body {
    margin: 0;
    background: #0a101d;
    font-family: "Liberation Sans", Arial, sans-serif;
    color: #eef2f8;
  }
  button {
    font-family: inherit;
    cursor: pointer;
  }
`;

const Page = styled.div`
  display: flex;
  flex-direction: column;
  min-height: 100vh;
`;

const Header = styled.header`
  display: flex;
  align-items: center;
  padding: 11px 14px 11px 15px;
  background: #0f1826;
  border-bottom: 1px solid #202a38;
`;

const Brand = styled.div`
  margin-left: 10px;
  padding-top: 1px;
  font-family: Inter, sans-serif;
`;

const Title = styled.h1`
  margin: 0;
  font-size: 16px;
  line-height: 17px;
  font-weight: 600;
`;

const Subtitle = styled.p`
  margin: 0;
  font-size: 11px;
  line-height: 14px;
  color: #93a3b8;
`;

const Partners = styled.div`
  display: flex;
  align-items: center;
  gap: 8px;
  margin: 0 auto 0 7px;
`;

const SmictBadge = styled.div`
  display: flex;
  align-items: center;
  padding: 6px;
  border-radius: 5px;
  background: #0561ee;
`;

const LoginButton = styled.button`
  display: flex;
  align-items: center;
  gap: 8px;
  height: 31px;
  margin-right: 18px;
  padding: 0 12px 0 13px;
  border: 1px solid #4b525e;
  border-radius: 16px;
  background: #2a303b;
  color: #fff;
  font-size: 13px;
  font-weight: 700;
`;

const LiveBadge = styled.div`
  display: flex;
  align-items: center;
  gap: 6px;
  height: 26px;
  padding: 0 10px;
  border: 1px solid #202f45;
  border-radius: 13px;
  background: #132035;
  color: #93a3b8;
  font-family: Inter, sans-serif;
  font-size: 12px;
`;

const Dot = styled.span`
  width: ${(p) => p.$size}px;
  height: ${(p) => p.$size}px;
  border-radius: 50%;
  background: #32a06b;
`;

const Content = styled.main`
  padding: 12px 14px 3px;
`;

const Stats = styled.section`
  display: grid;
  grid-template-columns: repeat(4, 1fr);
  gap: 8px;
`;

const Stat = styled.div`
  padding: 9px 8px 7px;
  border: 1px solid #202a38;
  border-radius: 14px;
  background: #121a27;
  text-align: center;
`;

const StatValue = styled.div`
  font-family: Inter, sans-serif;
  font-size: 18px;
  font-weight: 700;
  line-height: 24px;
  color: ${(p) => p.$color};
`;

const StatLabel = styled.div`
  font-family: Inter, sans-serif;
  font-size: 11px;
  line-height: 16px;
  color: #93a3b8;
`;

const Community = styled.a`
  display: flex;
  align-items: center;
  gap: 11px;
  height: 43px;
  margin-top: 14px;
  padding: 0 14px;
  border: 1px solid #202a38;
  border-radius: 14px;
  background: #121a27;
  color: #eef2f8;
  font-size: 14px;
  text-decoration: none;
`;

const Chevron = styled.span`
  margin-left: auto;
  color: #b6c0cd;
`;

const RescueButton = styled.button`
  display: flex;
  align-items: center;
  gap: 12px;
  width: 100%;
  height: 66px;
  margin-top: 8px;
  padding: 0 14px;
  border: 1px solid rgba(255, 255, 255, 0.15);
  border-radius: 14px;
  background: linear-gradient(#e5484d, #b5323a) border-box;
  box-shadow: 0 4px 14px rgba(0, 0, 0, 0.35);
  color: #fff;
  font-size: 18px;
  font-weight: 700;
`;

const Actions = styled.section`
  display: grid;
  grid-template-columns: 1fr 1fr;
  gap: 10px;
  margin-top: 10px;
`;

const ActionButton = styled.button`
  display: flex;
  align-items: center;
  gap: 12px;
  height: 72px;
  padding: 0 14px;
  border: 1px solid #202a38;
  border-radius: 14px;
  background: #121a27;
  color: #eef2f8;
  font-size: 14px;
  font-weight: 700;
`;

const IconTile = styled.span`
  display: flex;
  align-items: center;
  justify-content: center;
  width: 40px;
  height: 40px;
  border-radius: 11px;
  background: ${(p) => p.$color};
  color: #fff;
`;

const MapArea = styled.section`
  position: relative;
  flex: 1 0 300px;
  overflow: hidden;
  background: #f2efe9;
`;

const MapDrawing = styled.svg`
  position: absolute;
  inset: 0;
  width: 100%;
  height: 100%;
  font-family: "Noto Sans", sans-serif;
  text-anchor: middle;
`;

const PlaceText = styled.g`
  font-size: 12px;
  fill: #45444a;
  paint-order: stroke;
  stroke: rgba(255, 255, 255, 0.6);
  stroke-width: 2px;
`;

const TownText = styled(PlaceText)`
  font-size: 14px;
  fill: #333;
`;

const AreaText = styled(PlaceText)`
  font-style: italic;
  fill: #68586f;
`;

const ParkText = styled(AreaText)`
  font-size: 10px;
  fill: #777;
`;

const RoadText = styled.g`
  font-size: 8px;
  font-weight: 500;
  fill: #40202a;
`;

const ExitText = styled.g`
  font-size: 9px;
  font-style: italic;
  fill: #c4405f;
  paint-order: stroke;
  stroke: rgba(255, 255, 255, 0.7);
  stroke-width: 2px;
`;

const RiverText = styled.g`
  font-size: 9px;
  font-style: italic;
  fill: #5a93b5;
`;

const ShieldText = styled.g`
  font-size: 10px;
  fill: #5f4a45;
`;

const pinColors = {
  dark: "#8491a8",
  flood: "#f59e0b",
  open: "#22c55e",
};

const Pin = styled.button`
  position: absolute;
  display: flex;
  align-items: center;
  justify-content: center;
  width: 30px;
  height: 30px;
  padding: 0;
  transform: translate(-50%, -50%);
  border: 2px solid #fff;
  border-radius: 50%;
  background: ${(p) => pinColors[p.$kind] || "rgba(148, 163, 190, 0.9)"};
  box-shadow: 0 2px 6px rgba(0, 0, 0, 0.35);
`;

const ZoomControl = styled.div`
  position: absolute;
  top: 10px;
  left: 10px;
  border: 2px solid rgba(0, 0, 0, 0.25);
  border-radius: 4px;
`;

const ZoomButton = styled.button`
  display: block;
  width: 31px;
  height: 30px;
  padding: 3px 0 0;
  border: 0;
  background: #fff;
  color: #000;
  font-size: 22px;
  font-weight: 700;
  line-height: 27px;

  & + & {
    border-top: 1px solid #ccc;
  }
`;

const TabBar = styled.nav`
  position: sticky;
  bottom: 0;
  display: grid;
  grid-template-columns: repeat(4, 1fr);
  height: 56px;
  background: #1b222e;
`;

const Tab = styled.button`
  display: flex;
  flex-direction: column;
  align-items: center;
  justify-content: center;
  gap: 5px;
  padding: 0;
  border: 0;
  background: none;
  color: ${(p) => (p.$active ? "#3f83f0" : "#93a7bf")};
  font-size: 11px;
`;
